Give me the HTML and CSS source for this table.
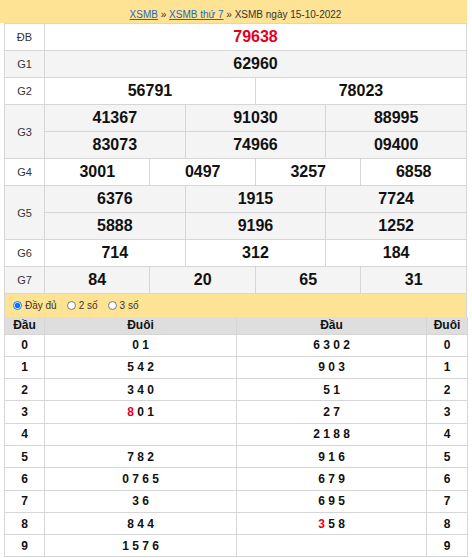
FILE: index.html
```html
<!DOCTYPE html>
<html lang="vi">
<head>
<meta charset="utf-8">
<title>XSMB ngày 15-10-2022</title>
<link rel="stylesheet" href="styles.css">
</head>
<body>
<div class="wrap">
  <div class="crumbs"><a href="#">XSMB</a> » <a href="#">XSMB thứ 7</a> » XSMB ngày 15-10-2022</div>
  <table class="kq">
    <colgroup>
      <col class="lab">
      <col><col><col><col><col><col><col><col><col><col><col><col>
    </colgroup>
    <tr class="w"><td class="l">ĐB</td><td colspan="12" class="db">79638</td></tr>
    <tr class="g"><td class="l">G1</td><td colspan="12">62960</td></tr>
    <tr class="w"><td class="l">G2</td><td colspan="6">56791</td><td colspan="6">78023</td></tr>
    <tr class="g"><td class="l" rowspan="2">G3</td><td colspan="4">41367</td><td colspan="4">91030</td><td colspan="4">88995</td></tr>
    <tr class="g"><td colspan="4">83073</td><td colspan="4">74966</td><td colspan="4">09400</td></tr>
    <tr class="w"><td class="l">G4</td><td colspan="3">3001</td><td colspan="3">0497</td><td colspan="3">3257</td><td colspan="3">6858</td></tr>
    <tr class="g"><td class="l" rowspan="2">G5</td><td colspan="4">6376</td><td colspan="4">1915</td><td colspan="4">7724</td></tr>
    <tr class="g"><td colspan="4">5888</td><td colspan="4">9196</td><td colspan="4">1252</td></tr>
    <tr class="w"><td class="l">G6</td><td colspan="4">714</td><td colspan="4">312</td><td colspan="4">184</td></tr>
    <tr class="g"><td class="l">G7</td><td colspan="3">84</td><td colspan="3">20</td><td colspan="3">65</td><td colspan="3">31</td></tr>
  </table>
  <div class="opts">
    <label class="opt"><input type="radio" name="m" checked> Đầy đủ</label>
    <label class="opt"><input type="radio" name="m"> 2 số</label>
    <label class="opt"><input type="radio" name="m"> 3 số</label>
  </div>
  <table class="lt">
    <colgroup><col class="c1"><col class="c2"><col class="c3"><col class="c4"></colgroup>
    <tr class="hd"><th>Đầu</th><th>Đuôi</th><th>Đầu</th><th>Đuôi</th></tr>
    <tr><td>0</td><td>0 1</td><td>6 3 0 2</td><td>0</td></tr>
    <tr><td>1</td><td>5 4 2</td><td>9 0 3</td><td>1</td></tr>
    <tr><td>2</td><td>3 4 0</td><td>5 1</td><td>2</td></tr>
    <tr><td>3</td><td><span class="r">8</span> 0 1</td><td>2 7</td><td>3</td></tr>
    <tr><td>4</td><td></td><td>2 1 8 8</td><td>4</td></tr>
    <tr><td>5</td><td>7 8 2</td><td>9 1 6</td><td>5</td></tr>
    <tr><td>6</td><td>0 7 6 5</td><td>6 7 9</td><td>6</td></tr>
    <tr><td>7</td><td>3 6</td><td>6 9 5</td><td>7</td></tr>
    <tr><td>8</td><td>8 4 4</td><td><span class="r">3</span> 5 8</td><td>8</td></tr>
    <tr><td>9</td><td>1 5 7 6</td><td></td><td>9</td></tr>
  </table>
</div>
</body>
</html>
```

FILE: styles.css
```css
* { box-sizing: border-box; }
html, body { margin: 0; padding: 0; background: #fff; }
body { font-family: "Liberation Sans", Arial, sans-serif; color: #111; }

.wrap { width: 467px; }

.crumbs {
  height: 23px;
  background: #fee394;
  font-size: 10px;
  line-height: 12px;
  padding-top: 9px;
  text-align: center;
  color: #333;
  padding-left: 4px;
}
.crumbs a { color: #2b65b5; text-decoration: underline; }

.kq {
  margin-left: 4px;
  width: 463px;
  border-collapse: collapse;
  table-layout: fixed;
}
.kq col.lab { width: 40px; }
.kq td {
  border: 1px solid #d6d6d6;
  height: 27px;
  padding: 0;
  text-align: center;
  vertical-align: middle;
  font-size: 16px;
  font-weight: bold;
  color: #111;
}
.kq td.l { font-size: 11px; font-weight: normal; color: #333; }
.kq td.db { color: #e3001b; }
.kq tr.g td { background: #f4f4f4; }
.kq tr.w td { background: #fff; }

.opts {
  margin-left: 4px;
  width: 463px;
  height: 23px;
  background: #fee394;
  border-left: 1px solid #d6d6d6;
  border-right: 1px solid #d6d6d6;
  display: flex;
  align-items: center;
  gap: 10px;
  padding-left: 8px;
  font-size: 10px;
  color: #333;
}
.opt { display: flex; align-items: center; gap: 3px; }
.opt input { margin: 0; width: 9px; height: 9px; }

.lt {
  margin-left: 4px;
  width: 463px;
  border-collapse: collapse;
  table-layout: fixed;
}
.lt col.c1 { width: 40px; }
.lt col.c2 { width: 192px; }
.lt col.c3 { width: 190px; }
.lt col.c4 { width: 41px; }
.lt th, .lt td {
  border: 1px solid #d6d6d6;
  padding: 0;
  text-align: center;
  font-size: 12px;
  font-weight: bold;
  color: #111;
}
.lt tr.hd th { background: #dedede; height: 17px; border-top: none; }
.lt td { height: 22.3px; background: #fff; }
.r { color: #e3001b; }
```
